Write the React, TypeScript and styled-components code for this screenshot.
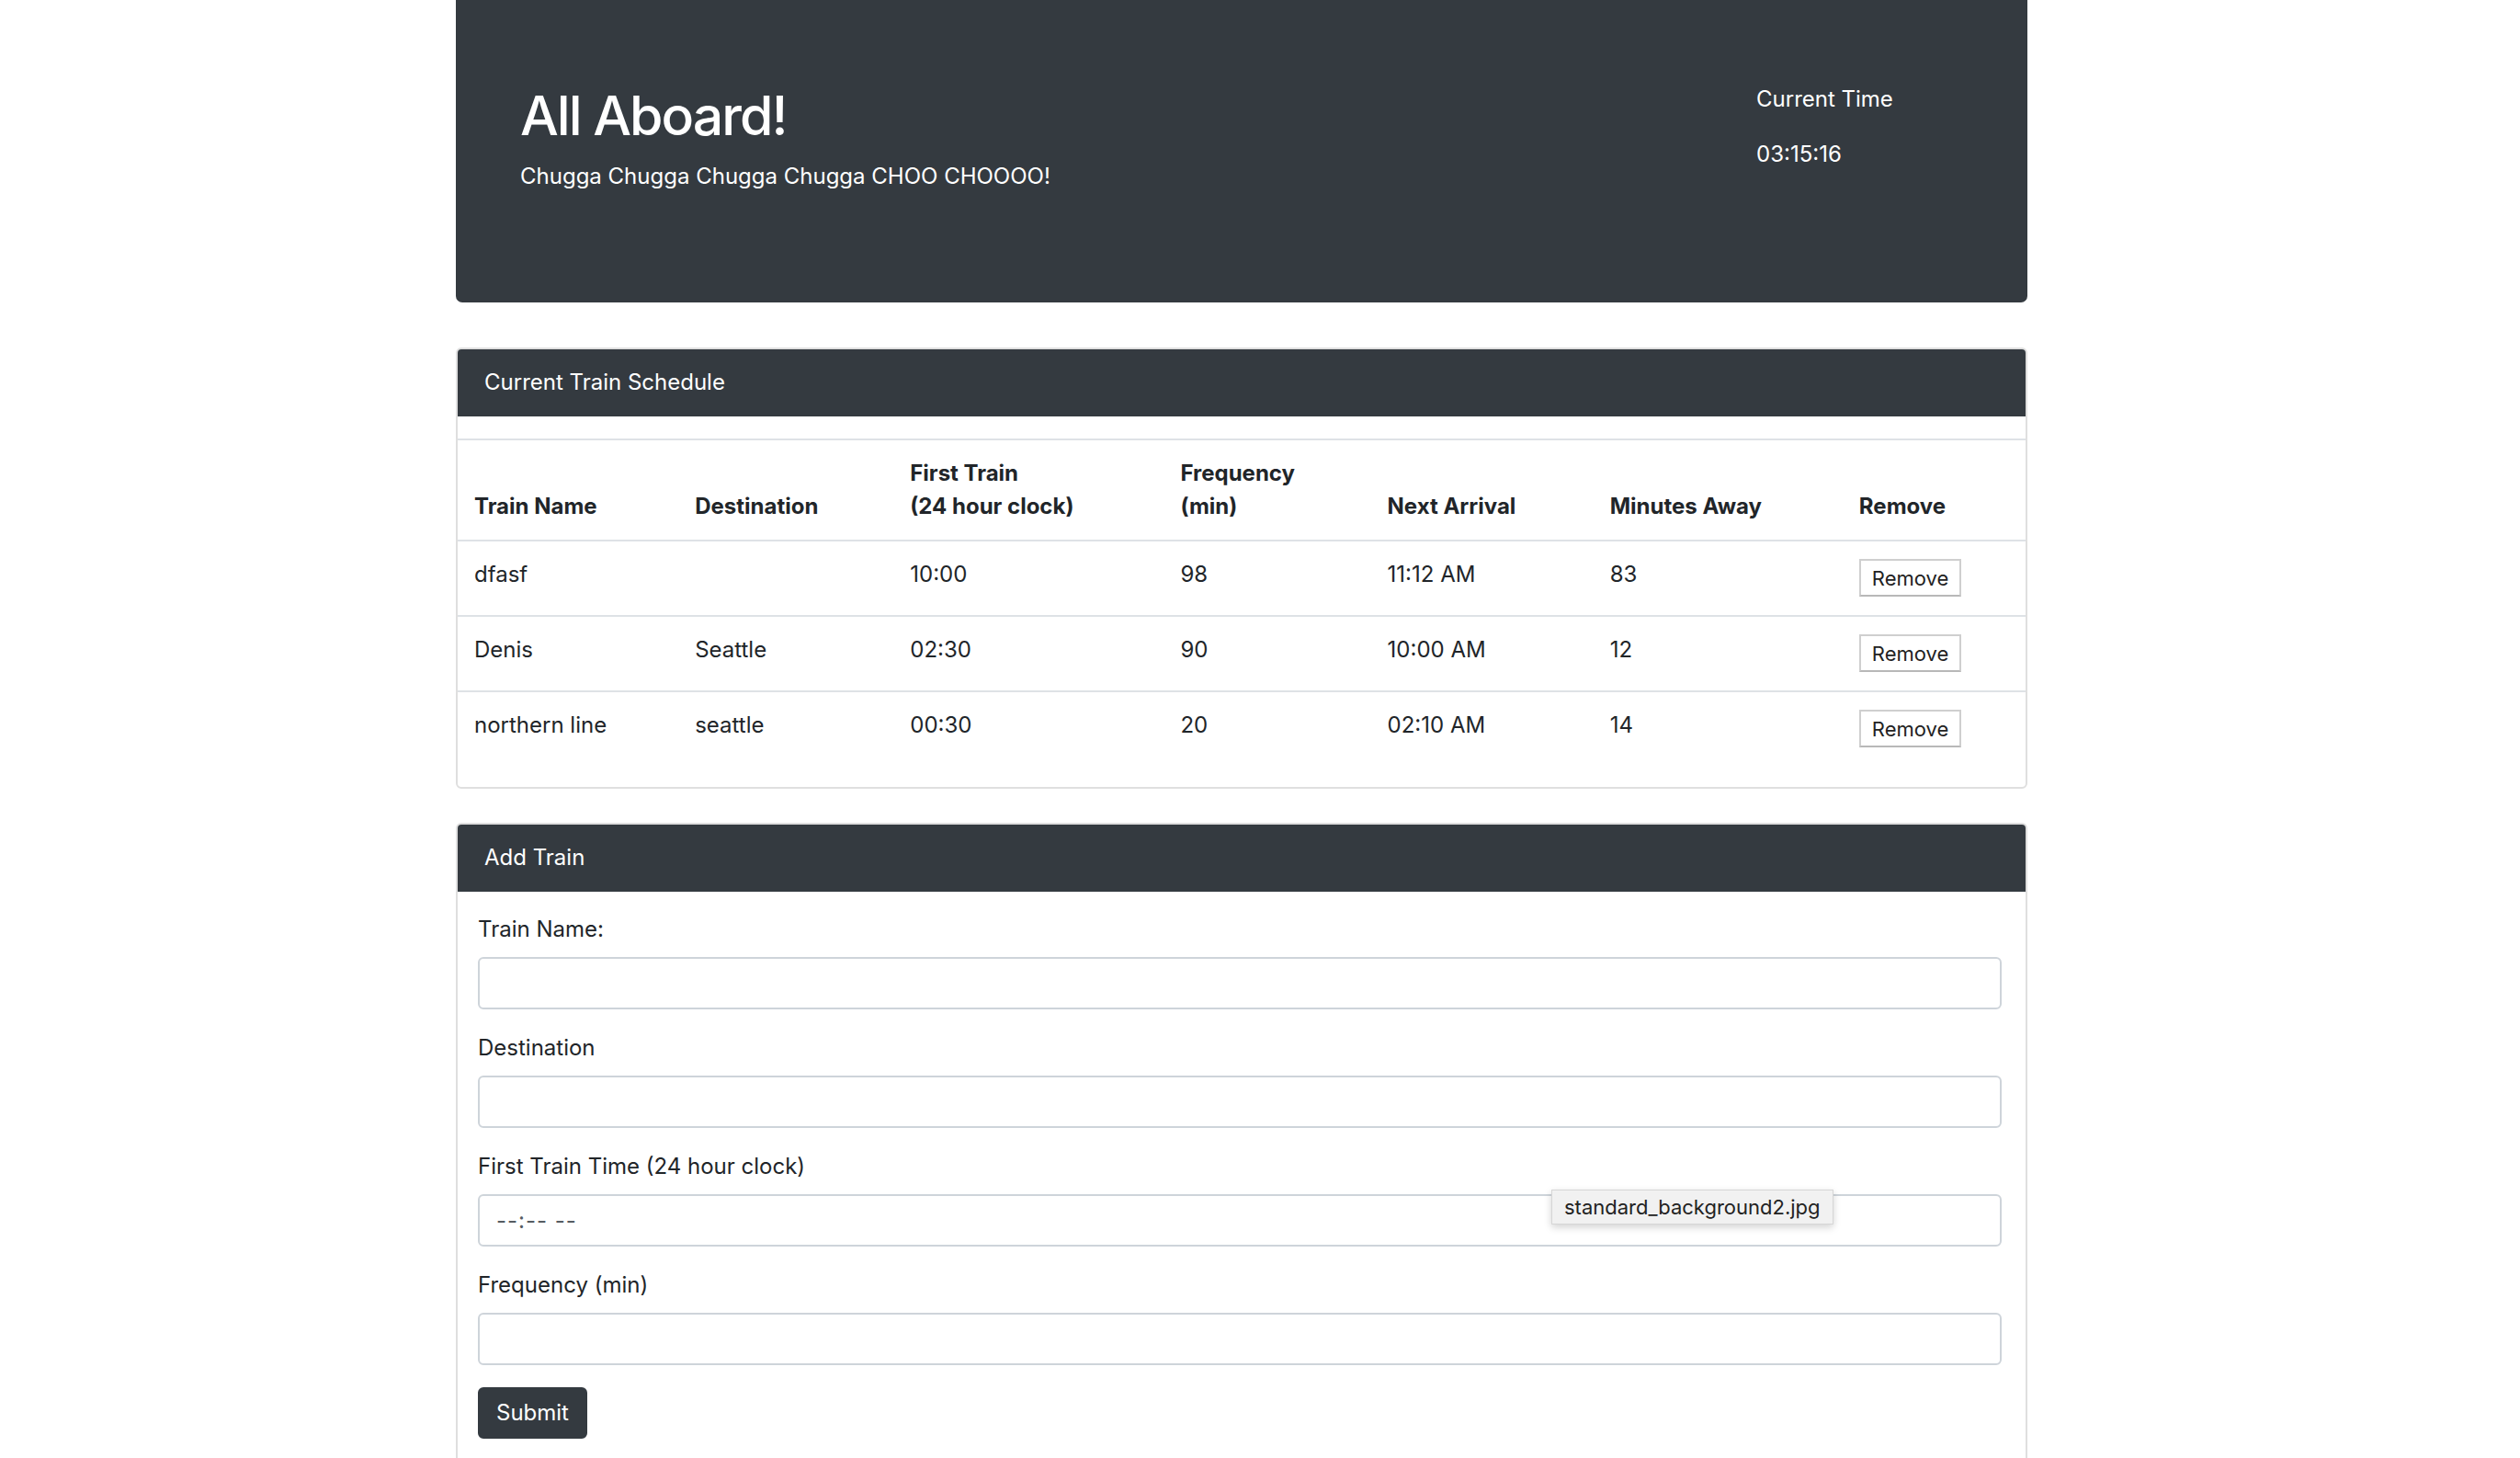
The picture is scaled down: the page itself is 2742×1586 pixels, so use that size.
import React from "react";
import styled, { createGlobalStyle } from "styled-components";

const GlobalStyle = createGlobalStyle`
  html, body {
    margin: 0;
    padding: 0;
    background: #ffffff;
  }
  body {
    font-family: Inter, "Liberation Sans", Arial, sans-serif;
    font-size: 24px;
    line-height: 1.5;
    color: #212529;
  }
  * { box-sizing: border-box; }
`;

const Page = styled.div`
  width: 1710px;
  margin-left: 496px;
  display: flex;
  flex-direction: column;
`;

const Jumbotron = styled.header`
  background: #343a40;
  color: #ffffff;
  border-radius: 0 0 7px 7px;
  padding: 90px 70px 95px 70px;
  display: grid;
  grid-template-columns: 1fr 225px;
  margin-bottom: 49px;
`;

const Title = styled.h1`
  margin: 0 0 12px 0;
  font-size: 59px;
  font-weight: 500;
  line-height: 72px;
  letter-spacing: -2px;
`;

const Lead = styled.p`
  margin: 0 0 24px 0;
  font-size: 24px;
  line-height: 36px;
`;

const TimeText = styled.p`
  margin: 0 0 24px 0;
  font-size: 24px;
  line-height: 36px;
`;

const Card = styled.section<{ $gapAfter?: number }>`
  border: 2px solid #dfdfdf;
  border-radius: 6px;
  overflow: visible;
  margin-bottom: ${(p) => p.$gapAfter ?? 0}px;
  background: #fff;
`;

const CardHeader = styled.div`
  background: #343a40;
  color: #ffffff;
  padding: 18px 30px 19px 29px;
  line-height: 36px;
  font-size: 24px;
  border-radius: 4px 4px 0 0;
`;

const Table = styled.table`
  width: 100%;
  border-collapse: collapse;
  margin: 24px 0 22px 0;
  table-layout: fixed;
  color: #212529;
`;

const Th = styled.th`
  text-align: left;
  vertical-align: bottom;
  font-weight: 700;
  padding: 18px;
  line-height: 36px;
  border-top: 2px solid #dee2e6;
  border-bottom: 2px solid #dee2e6;
`;

const Td = styled.td`
  text-align: left;
  vertical-align: top;
  padding: 18px 18px 20px 18px;
  line-height: 36px;
  border-top: 2px solid #dee2e6;
  height: 82px;
`;

const RemoveButton = styled.button`
  font-family: Inter, "Liberation Sans", Arial, sans-serif;
  font-size: 22px;
  line-height: 1;
  height: 41px;
  padding: 0 12px;
  margin-top: 1px;
  background: #ffffff;
  color: #222;
  border: 2px solid #cfcfcf;
  border-bottom-color: #b8b8b8;
  border-radius: 0;
  display: inline-flex;
  align-items: center;
  vertical-align: top;
`;

const FormBody = styled.form`
  padding: 23px 26px 30px 22px;
  display: flex;
  flex-direction: column;
`;

const Field = styled.div`
  display: flex;
  flex-direction: column;
  margin-bottom: 24px;
  position: relative;
`;

const Label = styled.label`
  display: block;
  font-size: 24px;
  line-height: 36px;
  margin-bottom: 12px;
`;

const Input = styled.input`
  height: 57px;
  width: 100%;
  padding: 9px 18px;
  font-family: Inter, "Liberation Sans", Arial, sans-serif;
  font-size: 24px;
  color: #495057;
  background: #fff;
  border: 2px solid #ced4da;
  border-radius: 6px;
  outline: none;
  &::placeholder {
    color: #555b61;
    letter-spacing: 1px;
  }
`;

const SubmitButton = styled.button`
  align-self: flex-start;
  background: #343a40;
  color: #ffffff;
  border: 2px solid #343a40;
  border-radius: 6px;
  font-family: Inter, "Liberation Sans", Arial, sans-serif;
  font-size: 24px;
  line-height: 36px;
  padding: 8px 18px;
`;

const Tooltip = styled.div`
  position: absolute;
  left: 1168px;
  top: 43px;
  height: 38px;
  padding: 0 13px;
  display: flex;
  align-items: center;
  background: #f1f1f1;
  border: 1px solid #d6d6d6;
  box-shadow: 0 3px 8px rgba(0, 0, 0, 0.18);
  font-size: 22px;
  color: #222;
  white-space: nowrap;
`;

type Train = {
  name: string;
  dest: string;
  first: string;
  freq: string;
  next: string;
  away: string;
};

const trains: Train[] = [
  { name: "dfasf", dest: "", first: "10:00", freq: "98", next: "11:12 AM", away: "83" },
  { name: "Denis", dest: "Seattle", first: "02:30", freq: "90", next: "10:00 AM", away: "12" },
  { name: "northern line", dest: "seattle", first: "00:30", freq: "20", next: "02:10 AM", away: "14" },
];

const colWidths = [240, 234, 294, 225, 242, 271, 199];

export default function App() {
  return (
    <>
      <GlobalStyle />
      <Page>
        <Jumbotron>
          <div>
            <Title>All Aboard!</Title>
            <Lead>Chugga Chugga Chugga Chugga CHOO CHOOOO!</Lead>
          </div>
          <div>
            <TimeText>Current Time</TimeText>
            <TimeText>03:15:16</TimeText>
          </div>
        </Jumbotron>

        <Card $gapAfter={37}>
          <CardHeader>Current Train Schedule</CardHeader>
          <Table>
            <colgroup>
              {colWidths.map((w, i) => (
                <col key={i} style={{ width: `${w}px` }} />
              ))}
            </colgroup>
            <thead>
              <tr>
                <Th>Train Name</Th>
                <Th>Destination</Th>
                <Th>
                  First Train
                  <br />
                  (24 hour clock)
                </Th>
                <Th>
                  Frequency
                  <br />
                  (min)
                </Th>
                <Th>Next Arrival</Th>
                <Th>Minutes Away</Th>
                <Th>Remove</Th>
              </tr>
            </thead>
            <tbody>
              {trains.map((t) => (
                <tr key={t.name}>
                  <Td>{t.name}</Td>
                  <Td>{t.dest}</Td>
                  <Td>{t.first}</Td>
                  <Td>{t.freq}</Td>
                  <Td>{t.next}</Td>
                  <Td>{t.away}</Td>
                  <Td>
                    <RemoveButton type="button">Remove</RemoveButton>
                  </Td>
                </tr>
              ))}
            </tbody>
          </Table>
        </Card>

        <Card>
          <CardHeader>Add Train</CardHeader>
          <FormBody onSubmit={(e) => e.preventDefault()}>
            <Field>
              <Label>Train Name:</Label>
              <Input type="text" />
            </Field>
            <Field>
              <Label>Destination</Label>
              <Input type="text" />
            </Field>
            <Field>
              <Label>First Train Time (24 hour clock)</Label>
              <Input type="text" placeholder="--:-- --" />
              <Tooltip>standard_background2.jpg</Tooltip>
            </Field>
            <Field>
              <Label>Frequency (min)</Label>
              <Input type="text" />
            </Field>
            <SubmitButton type="submit">Submit</SubmitButton>
          </FormBody>
        </Card>
      </Page>
    </>
  );
}
